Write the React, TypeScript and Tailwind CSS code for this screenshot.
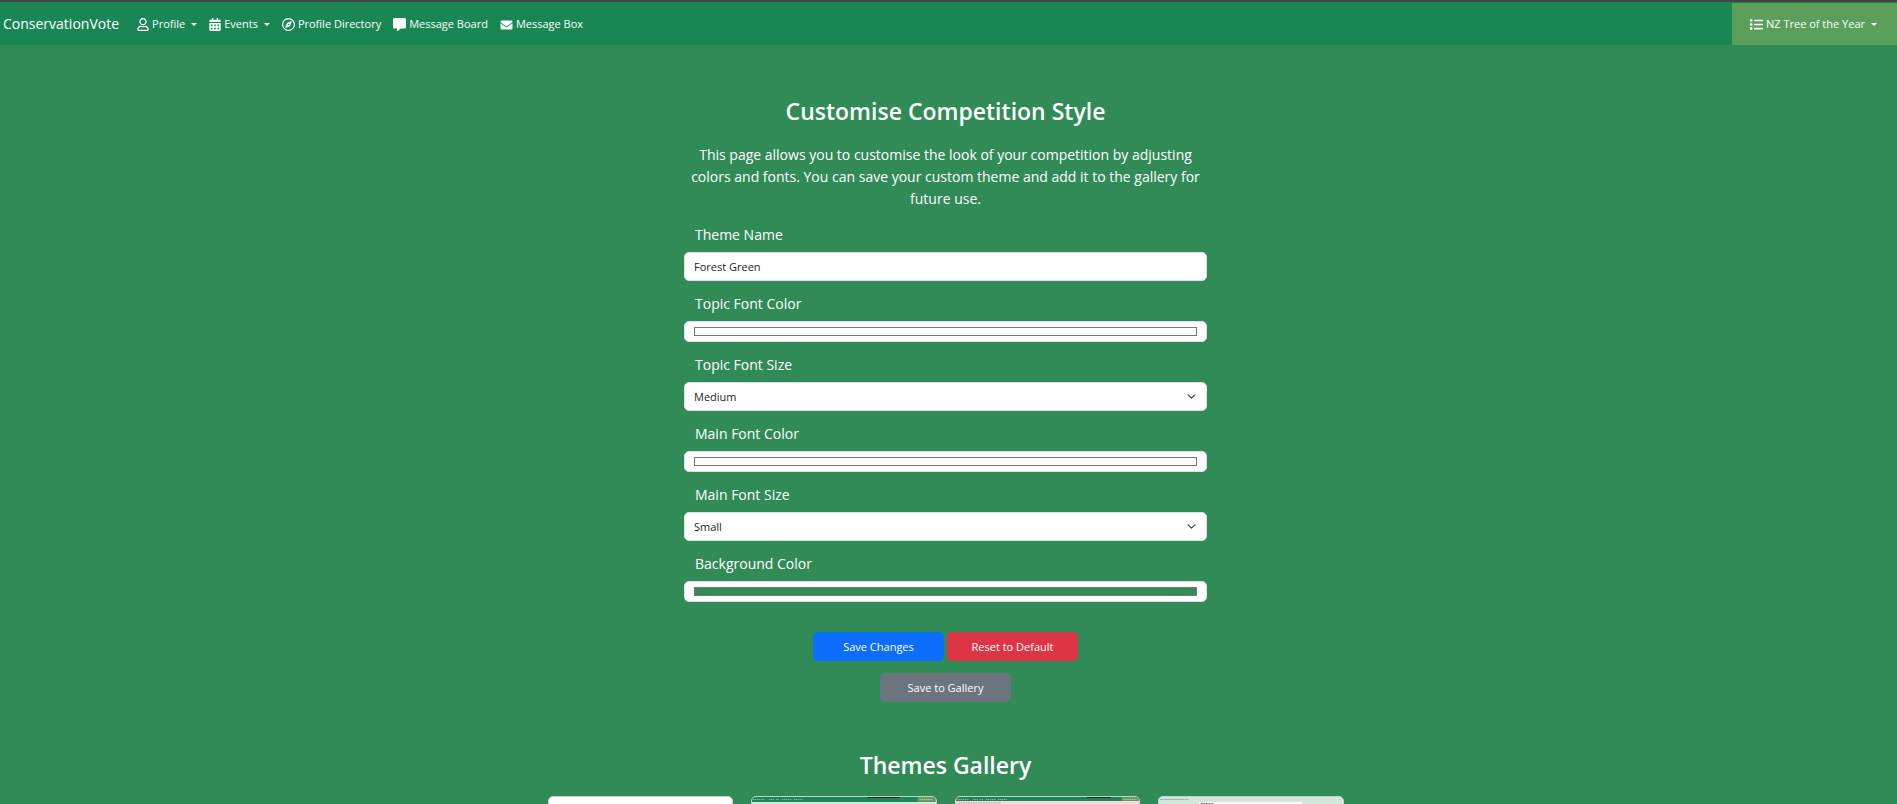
import { useState, type ReactNode } from "react";
import { FaCalendarAlt, FaList, FaRegUser } from "react-icons/fa";
import { FaEnvelope, FaMessage, FaRegCompass } from "react-icons/fa6";

function Caret() {
  return (
    <svg viewBox="0 0 6 3" className="ml-1.5 h-[3px] w-1.5" fill="currentColor" aria-hidden="true">
      <path d="M0 0h6L3 3z" />
    </svg>
  );
}

function NavLink({ icon, children }: { icon: ReactNode; children: ReactNode }) {
  return (
    <a href="#" className="flex items-center gap-[3px] whitespace-nowrap">
      {icon}
      {children}
    </a>
  );
}

function NavMenu({ icon, children }: { icon: ReactNode; children: ReactNode }) {
  return (
    <button type="button" className="flex items-center whitespace-nowrap">
      <span className="flex items-center gap-[3px]">
        {icon}
        {children}
      </span>
      <Caret />
    </button>
  );
}

function Navbar() {
  return (
    <nav className="flex h-[45px] items-stretch border-t-2 border-[#444444] bg-[#198754] text-[11px] text-white">
      <a href="#" className="flex items-center pl-[3px] text-[14px]">
        ConservationVote
      </a>
      <div className="ml-[18px] flex items-center gap-3 pt-0.5">
        <NavMenu icon={<FaRegUser className="h-[13px] w-3" />}>Profile</NavMenu>
        <NavMenu icon={<FaCalendarAlt className="h-[13px] w-3" />}>Events</NavMenu>
        <NavLink icon={<FaRegCompass className="size-[13px]" />}>Profile Directory</NavLink>
        <NavLink icon={<FaMessage className="size-[13px]" />}>Message Board</NavLink>
        <NavLink icon={<FaEnvelope className="h-3 w-[13px]" />}>Message Box</NavLink>
      </div>
      <div className="ml-auto flex border-t border-[#198754] bg-[#5a9f5a] pt-px pr-5 pl-[18px]">
        <NavMenu icon={<FaList className="size-[13px]" />}>NZ Tree of the Year</NavMenu>
      </div>
    </nav>
  );
}

function Field({ id, label, children }: { id: string; label: string; children: ReactNode }) {
  return (
    <div className="flex flex-col">
      <label htmlFor={id} className="flex h-10 items-center px-[11px] pt-1 text-[14px]">
        {label}
      </label>
      {children}
    </div>
  );
}

const control = "w-full rounded-[5px] border border-[#dee2e6] bg-white px-[9px] text-[11px] text-[#212529]";

function ColorField({ id, label, initial }: { id: string; label: string; initial: string }) {
  const [value, setValue] = useState(initial);
  return (
    <Field id={id} label={label}>
      <input
        id={id}
        type="color"
        value={value}
        onChange={(e) => setValue(e.target.value)}
        className={`${control} h-[21px] appearance-none py-[5px] [&::-webkit-color-swatch]:rounded-none [&::-webkit-color-swatch]:border [&::-webkit-color-swatch]:border-[#777777] [&::-webkit-color-swatch-wrapper]:p-0`}
      />
    </Field>
  );
}

function SizeField({ id, label, initial }: { id: string; label: string; initial: string }) {
  return (
    <Field id={id} label={label}>
      <div className="relative">
        <select id={id} defaultValue={initial} className={`${control} block h-[29px] appearance-none pt-0.5`}>
          <option>Small</option>
          <option>Medium</option>
          <option>Large</option>
        </select>
        <svg
          viewBox="0 0 16 16"
          className="pointer-events-none absolute top-2.5 right-[11px] size-[9px]"
          fill="none"
          stroke="#343a40"
          strokeLinecap="round"
          strokeLinejoin="round"
          strokeWidth="2"
          aria-hidden="true"
        >
          <path d="m2 5 6 6 6-6" />
        </svg>
      </div>
    </Field>
  );
}

function ThemeCard({ children }: { children?: ReactNode }) {
  return (
    <div className="h-40 overflow-hidden rounded-[5px] border border-[#cccccc] bg-white">
      {children}
    </div>
  );
}

function MiniPage({ body, notice }: { body: string; notice?: boolean }) {
  return (
    <svg viewBox="0 0 184 158" className="block w-full" aria-hidden="true">
      <rect width="184" height="158" fill={body} />
      <rect width="184" height={notice ? 4 : 5} fill="#198754" />
      <rect x="166" width="18" height={notice ? 4 : 5} fill="#5a9f5a" />
      <rect x={notice ? 131 : 116} width={notice ? 24 : 32} height="1" fill="#1d2b24" />
      <path d="M1 2.500h12M17 2.500h5M24 2.500h3M30 2.500h10M42 2.500h9" stroke="#a3cfbb" strokeWidth=".7" strokeDasharray="1.500 .5" />
      <path d="M168 2.500h13" stroke="#c5dfc5" strokeWidth=".7" strokeDasharray="1.500 .5" />
      {notice && <path d="M2 6h43" stroke="#b98d93" strokeWidth=".7" strokeDasharray="2 .5" />}
    </svg>
  );
}

function LightPage() {
  return (
    <svg viewBox="0 0 184 158" className="block w-full" aria-hidden="true">
      <rect width="184" height="158" fill="#d1e7dd" />
      <path d="M1 2.500h29M181 2.500h1" stroke="#7d9689" strokeWidth=".7" strokeDasharray="2 .5" />
      <rect x="40" y="5" width="103" height="153" fill="#ffffff" />
      <path d="M42 6.500h13" stroke="#555555" strokeWidth=".8" strokeDasharray="2 .5" />
    </svg>
  );
}

const action = "h-[29px] w-[131px] rounded-[5px] pt-0.5 text-[11px] text-white";

export default function App() {
  return (
    <div className="h-screen overflow-hidden bg-[#318b57] font-['Open_Sans','Noto_Sans',sans-serif] text-white">
      <Navbar />
      <main className="flex flex-col items-center pt-[49px] pr-1.5">
        <form className="w-[523px] max-w-full" onSubmit={(e) => e.preventDefault()}>
          <h1 className="text-center text-[23px] leading-[34px] font-semibold">
            Customise Competition Style
          </h1>
          <p className="mt-4 mb-0.5 text-center text-[14px] leading-[22px]">
            This page allows you to customise the look of your competition by adjusting colors and
            fonts. You can save your custom theme and add it to the gallery for future use.
          </p>
          <Field id="theme-name" label="Theme Name">
            <input id="theme-name" type="text" defaultValue="Forest Green" className={`${control} h-[29px]`} />
          </Field>
          <ColorField id="topic-color" label="Topic Font Color" initial="#ffffff" />
          <SizeField id="topic-size" label="Topic Font Size" initial="Medium" />
          <ColorField id="main-color" label="Main Font Color" initial="#ffffff" />
          <SizeField id="main-size" label="Main Font Size" initial="Small" />
          <ColorField id="background-color" label="Background Color" initial="#318b57" />
          <div className="mt-[30px] flex justify-center gap-[3px]">
            <button type="submit" className={`${action} bg-[#0d6efd]`}>Save Changes</button>
            <button type="reset" className={`${action} bg-[#dc3545]`}>Reset to Default</button>
          </div>
          <div className="mt-3 flex justify-center">
            <button type="button" className={`${action} bg-[#6c757d]`}>Save to Gallery</button>
          </div>
        </form>
        <section className="mt-[46px] w-[796px] max-w-full">
          <h2 className="text-center text-[23px] leading-[34px] font-semibold">Themes Gallery</h2>
          <div className="mt-3.5 grid grid-cols-4 gap-[18px]">
            <ThemeCard />
            <ThemeCard>
              <MiniPage body="#d1e7dd" />
            </ThemeCard>
            <ThemeCard>
              <MiniPage body="#f8d7da" notice />
            </ThemeCard>
            <ThemeCard>
              <LightPage />
            </ThemeCard>
          </div>
        </section>
      </main>
    </div>
  );
}
